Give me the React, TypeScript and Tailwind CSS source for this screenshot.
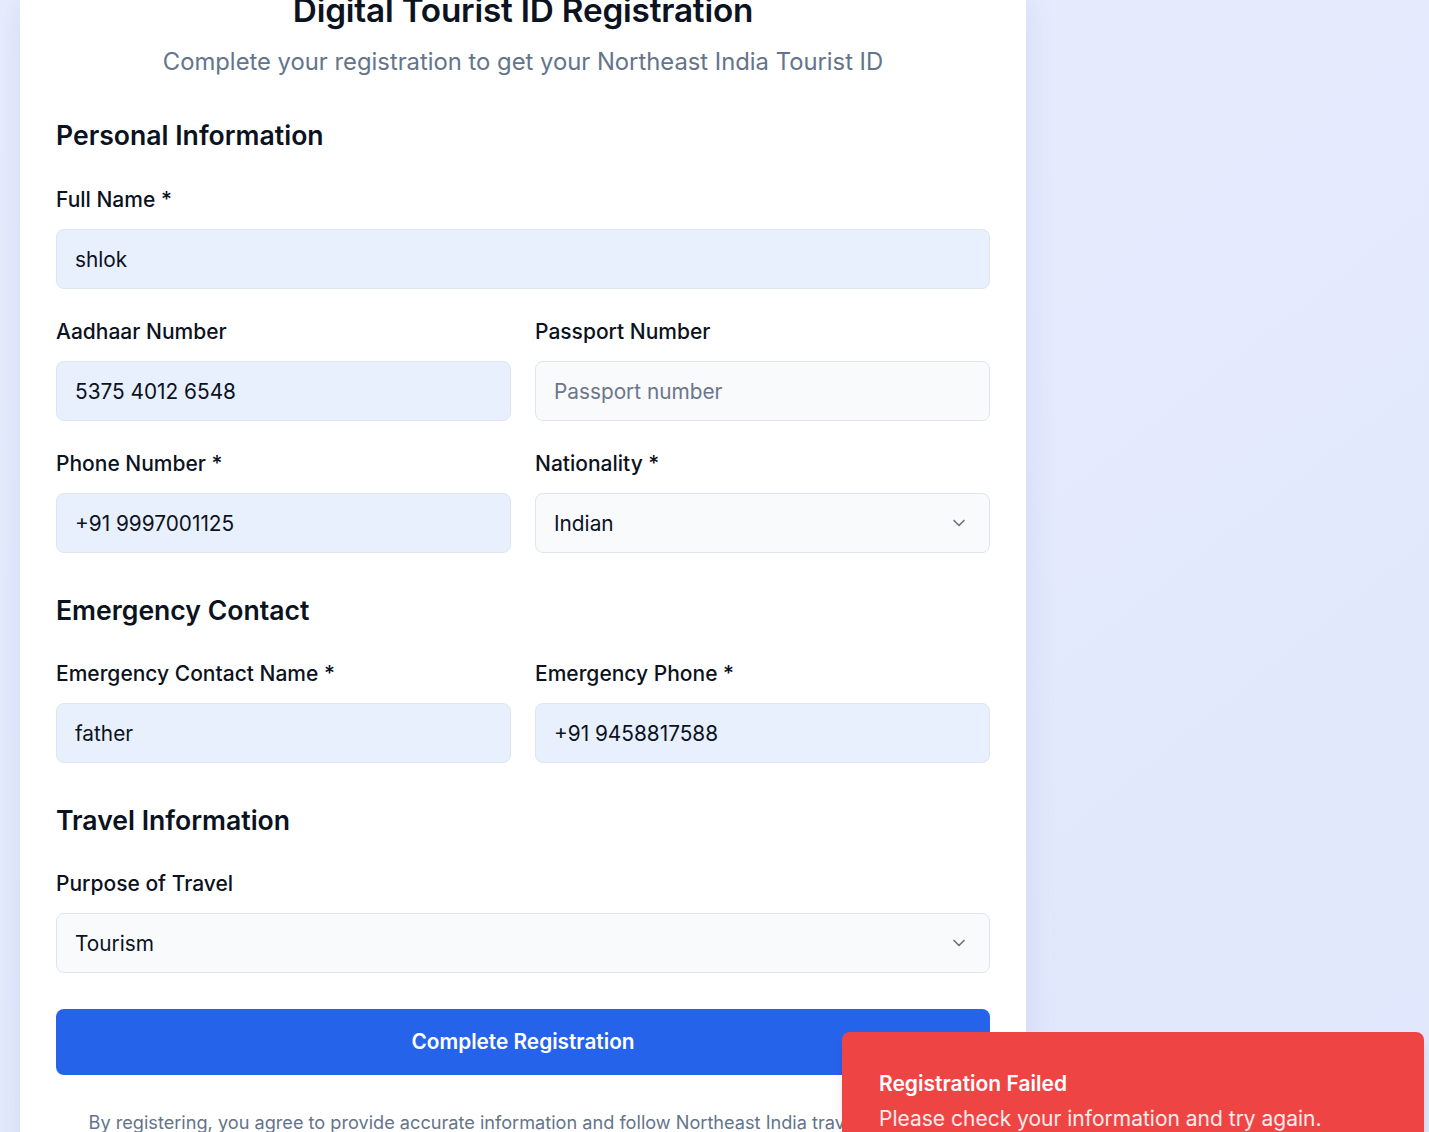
import React from "react";
import { ChevronDown } from "lucide-react";

function Label({ children }: { children: React.ReactNode }) {
  return (
    <div className="text-[21px] leading-[24px] font-medium text-[#0b1220] h-[24px]">{children}</div>
  );
}

function Input({ value, placeholder, filled = true }: { value?: string; placeholder?: string; filled?: boolean }) {
  return (
    <div
      className={
        "mt-[17px] h-[60px] rounded-[8px] border border-[#dfe5ee] flex items-center px-[18px] pt-[2px] text-[20.8px] " +
        (filled ? "bg-[#e8f0fe] text-[#0b1220]" : "bg-[#f8fafc] text-[#6b7689]")
      }
    >
      {value ?? placeholder}
    </div>
  );
}

function Select({ value }: { value: string }) {
  return (
    <div className="mt-[17px] h-[60px] rounded-[8px] border border-[#dfe5ee] bg-[#f8fafc] flex items-center justify-between pl-[18px] pr-[20px] text-[20.8px] text-[#0b1220]">
      <span className="pt-[1px]">{value}</span>
      <ChevronDown size={20} strokeWidth={2} className="text-[#6b7280]" />
    </div>
  );
}

function Heading({ children }: { children: React.ReactNode }) {
  return <h2 className="text-[26.6px] leading-[32px] font-semibold text-[#0b1220]">{children}</h2>;
}

export default function App() {
  return (
    <div className="relative h-[1132px] overflow-hidden bg-gradient-to-br from-[#e7edfd] via-[#e5ebfd] to-[#e0e6fb] font-['Inter',sans-serif]">
      <div className="flex pl-[20px]">
        <div className="w-[1006px] bg-white shadow-[0_10px_30px_rgba(60,80,160,0.12)] mt-[-8px] pb-[60px]">
          <div className="text-center">
            <h1 className="text-[33.3px] leading-[36px] font-semibold text-[#0b1220] tracking-[-0.2px]">
              Digital Tourist ID Registration
            </h1>
            <p className="mt-[18px] text-[23.8px] leading-[30px] text-[#64748b] pt-[1px]">
              Complete your registration to get your Northeast India Tourist ID
            </p>
          </div>

          <div className="px-[36px]">
            <div className="mt-[42px]">
              <Heading>Personal Information</Heading>
              <div className="mt-[37px]">
                <Label>Full Name *</Label>
                <Input value="shlok" />
              </div>
              <div className="mt-[31px] grid grid-cols-2 gap-x-[24px] gap-y-[31px]">
                <div>
                  <Label>Aadhaar Number</Label>
                  <Input value="5375 4012 6548" />
                </div>
                <div>
                  <Label>Passport Number</Label>
                  <Input placeholder="Passport number" filled={false} />
                </div>
                <div>
                  <Label>Phone Number *</Label>
                  <Input value="+91 9997001125" />
                </div>
                <div>
                  <Label>Nationality *</Label>
                  <Select value="Indian" />
                </div>
              </div>
            </div>

            <div className="mt-[41px]">
              <Heading>Emergency Contact</Heading>
              <div className="mt-[36px] grid grid-cols-2 gap-x-[24px]">
                <div>
                  <Label>Emergency Contact Name *</Label>
                  <Input value="father" />
                </div>
                <div>
                  <Label>Emergency Phone *</Label>
                  <Input value="+91 9458817588" />
                </div>
              </div>
            </div>

            <div className="mt-[41px]">
              <Heading>Travel Information</Heading>
              <div className="mt-[36px]">
                <Label>Purpose of Travel</Label>
                <Select value="Tourism" />
              </div>
            </div>

            <button className="mt-[36px] w-full h-[66px] rounded-[8px] bg-[#2563eb] text-white text-[20.8px] font-semibold">
              Complete Registration
            </button>

            <p className="mt-[35px] text-center text-[18.15px] leading-[24px] text-[#64748b]">
              By registering, you agree to provide accurate information and follow Northeast India travel guidelines.
            </p>
          </div>
        </div>
      </div>

      <div className="absolute left-[842px] top-[1032px] w-[582px] rounded-[8px] bg-[#ef4444] pl-[37px] pr-[37px] pt-[38px] pb-[40px] shadow-lg">
        <div className="text-[21px] leading-[28px] font-semibold text-white">Registration Failed</div>
        <div className="mt-[6px] text-[21px] leading-[30px] text-white/90">Please check your information and try again.</div>
      </div>
    </div>
  );
}
